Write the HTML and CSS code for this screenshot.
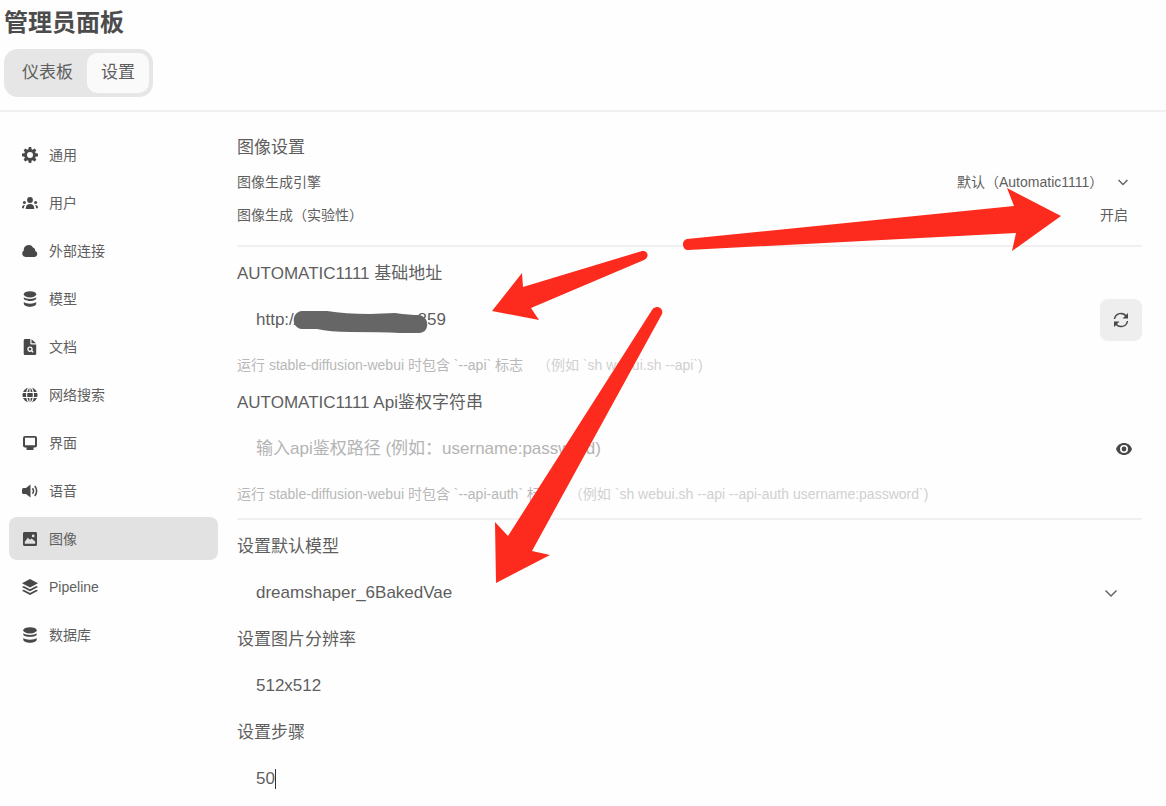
FILE: index.html
```html
<!DOCTYPE html>
<html lang="zh-CN">
<head>
<meta charset="utf-8">
<meta name="viewport" content="width=device-width, initial-scale=1">
<title>管理员面板</title>
<link rel="stylesheet" href="styles.css">
</head>
<body>
<header class="header">
  <h1 class="title">管理员面板</h1>
  <div class="tabs">
    <button class="tab" type="button">仪表板</button>
    <button class="tab tab-active" type="button">设置</button>
  </div>
</header>
<div class="layout">
  <nav class="sidebar">
    <a class="nav-item" href="#general"><svg class="icon" viewBox="0 0 16 16"><path fill-rule="evenodd" d="M6.800 0h2.400l.4 2.200 1.100.5 1.900-1.300 1.800 1.800-1.300 1.900.5 1.100 2.400.4v2.600l-2.400.5-.5 1.100 1.300 1.900-1.800 1.800-1.900-1.300-1.100.5L9.200 16H6.800l-.4-2.300-1.100-.5-1.900 1.300-1.800-1.800 1.300-1.900-.5-1.100L0 9.200V6.600l2.400-.4.5-1.100-1.300-1.900 1.800-1.800 1.900 1.300 1.100-.5zM8 5a3 3 0 1 0 0 6 3 3 0 0 0 0-6z"/></svg>通用</a>
    <a class="nav-item" href="#users"><svg class="icon" viewBox="0 0 16 16"><circle cx="8" cy="5" r="2.900"/><path d="M3.700 14c0-3.200 1.500-5 4.300-5s4.300 1.800 4.300 5z"/><circle cx="2.400" cy="7.400" r="1.500"/><circle cx="13.600" cy="7.400" r="1.500"/><path d="M0 13.200c0-2 .8-3.100 2.900-3.100-.7.900-1 1.900-1 3.100zM16 13.200c0-2-.8-3.100-2.900-3.100.7.900 1 1.900 1 3.100z"/></svg>用户</a>
    <a class="nav-item" href="#connections"><svg class="icon" viewBox="0 0 16 16"><path d="M3.500 14A3.500 3.500 0 0 1 1.800 7.600 5 5 0 0 1 11 4.400a3 3 0 0 1 2.100 3.300A3.300 3.300 0 0 1 12.800 14z"/></svg>外部连接</a>
    <a class="nav-item" href="#models"><svg class="icon" viewBox="0 0 16 16"><ellipse cx="8" cy="3.300" rx="6.200" ry="3.100"/><path d="M1.800 6.200c2.600 2.300 9.800 2.300 12.400 0v1.200c-.5 3.300-11.900 3.300-12.400 0zM1.800 11c2.600 2.300 9.800 2.300 12.400 0v1.700c-.5 3.900-11.900 3.900-12.400 0z"/></svg>模型</a>
    <a class="nav-item" href="#documents"><svg class="icon" viewBox="0 0 16 16"><path fill-rule="evenodd" d="M3.300 0h5v4.200c0 .8.400 1.200 1.200 1.200h4.700v9c0 1-.6 1.600-1.600 1.600H3.300c-1 0-1.600-.6-1.600-1.600V1.600C1.700.6 2.300 0 3.300 0zM8 7.500a2.700 2.700 0 1 0 1.400 5l1.300 1.200.9-.9-1.200-1.300A2.700 2.700 0 0 0 8 7.500zM8 8.800a1.400 1.400 0 1 1 0 2.800 1.400 1.400 0 0 1 0-2.800z"/><path d="M9.500.2l4.500 4h-4.500z"/></svg>文档</a>
    <a class="nav-item" href="#search"><svg class="icon" viewBox="0 0 16 16"><circle cx="8" cy="8" r="7.600"/><g class="cut"><ellipse cx="8" cy="8" rx="3.400" ry="7.700"/><path d="M0 5.500h16M0 10.500h16M8 0v5.500M8 10.500V16"/></g></svg>网络搜索</a>
    <a class="nav-item" href="#interface"><svg class="icon" viewBox="0 0 16 16"><path fill-rule="evenodd" d="M3 1h10a2 2 0 0 1 2 2v7.500a2 2 0 0 1-2 2h-1.500V15h-7v-2.500H3a2 2 0 0 1-2-2V3a2 2 0 0 1 2-2zm0 1.700v7.600h10V2.700z"/></svg>界面</a>
    <a class="nav-item" href="#audio"><svg class="icon" viewBox="0 0 16 16"><path d="M8.500 1.500v13L4 11H1.500Q0 11 0 9.500v-3Q0 5 1.500 5H4z"/><path class="line" d="M10.500 5.300q2 2.700 0 5.400M12.800 3q3.700 5 0 10"/></svg>语音</a>
    <a class="nav-item nav-active" href="#images" aria-current="page"><svg class="icon" viewBox="0 0 16 16"><path fill-rule="evenodd" d="M2.500 1h11C14.500 1 15 1.600 15 2.500v11c0 .9-.6 1.500-1.500 1.500h-11C1.600 15 1 14.400 1 13.500v-11C1 1.600 1.600 1 2.500 1zm.3 9.700 3-3.900 2.200 2 1.600-1.200 3.600 2.900v2.200H2.800zM11.200 3.500a1.400 1.400 0 1 0 0 2.800 1.400 1.400 0 0 0 0-2.800z"/></svg>图像</a>
    <a class="nav-item" href="#pipelines"><svg class="icon" viewBox="0 0 16 16"><path d="M8 0l8 4.200-8 4.300-8-4.300zM1.800 7L8 10.300 14.200 7 16 8l-8 4.300L0 8zM1.800 10.800L8 14l6.200-3.200 1.800 1L8 16l-8-4.200z"/></svg>Pipeline</a>
    <a class="nav-item" href="#database"><svg class="icon" viewBox="0 0 16 16"><ellipse cx="8" cy="3.300" rx="6.700" ry="3.100"/><path d="M1.300 6.200c2.600 2.300 10.800 2.300 13.400 0v1.200c-.5 3.300-12.900 3.300-13.400 0zM1.300 11c2.600 2.300 10.800 2.300 13.400 0v1.700c-.5 3.900-12.900 3.900-13.400 0z"/></svg>数据库</a>
  </nav>
  <main class="main">
    <section class="section">
      <h2 class="heading">图像设置</h2>
      <div class="row">
        <label for="engine">图像生成引擎</label>
        <div class="select-wrap">
          <select class="engine" id="engine"><option>默认（Automatic1111）</option></select>
          <svg class="chevron chevron-engine" viewBox="0 0 12 12"><path d="M1.500 4L6 8.500 10.500 4"/></svg>
        </div>
      </div>
      <div class="row">
        <span>图像生成（实验性）</span>
        <button class="toggle" type="button">开启</button>
      </div>
    </section>
    <section class="section">
      <label class="heading" for="url">AUTOMATIC1111 基础地址</label>
      <div class="field">
        <input class="input" id="url" type="text" value="http://xxxxxxxxxxxxxx859" spellcheck="false">
        <button class="refresh" type="button" aria-label="刷新"><svg class="icon" viewBox="0 0 16 16"><path class="line" d="M1.500 7a6.500 6.500 0 0 1 11.800-2.700M14.500 9a6.500 6.500 0 0 1-11.800 2.700"/><path d="M15 1v5.500H9.500zM1 15V9.500h5.500z"/></svg></button>
      </div>
      <p class="hint">运行 stable-diffusion-webui 时包含 `--api` 标志 <span class="hint-light">（例如 `sh webui.sh --api`)</span></p>
      <label class="heading" for="auth">AUTOMATIC1111 Api鉴权字符串</label>
      <div class="field">
        <input class="input" id="auth" type="text" placeholder="输入api鉴权路径 (例如：username:password)">
        <button class="reveal" type="button" aria-label="显示"><svg class="icon" viewBox="0 0 16 16"><path fill-rule="evenodd" d="M8 2c3.800 0 6.800 2.300 8 6-1.200 3.700-4.200 6-8 6S1.200 11.700 0 8c1.200-3.700 4.200-6 8-6zm0 2a4 4 0 1 0 0 8 4 4 0 0 0 0-8z"/><circle cx="8" cy="8" r="2.400"/></svg></button>
      </div>
      <p class="hint">运行 stable-diffusion-webui 时包含 `--api-auth` 标志 <span class="hint-light">（例如 `sh webui.sh --api --api-auth username:password`)</span></p>
    </section>
    <section class="section">
      <label class="heading" for="model">设置默认模型</label>
      <div class="field">
        <select class="input" id="model"><option>dreamshaper_6BakedVae</option></select>
        <svg class="chevron chevron-model" viewBox="0 0 12 12"><path d="M.5 3.500L6 9l5.500-5.500"/></svg>
      </div>
      <label class="heading" for="size">设置图片分辨率</label>
      <div class="field"><input class="input" id="size" type="text" value="512x512"></div>
      <label class="heading" for="steps">设置步骤</label>
      <div class="field"><input class="input input-steps" id="steps" type="text" value="50"><span class="caret"></span></div>
    </section>
  </main>
</div>
<svg class="annotations" width="1166" height="806" viewBox="0 0 1166 806" aria-hidden="true">
  <path class="redaction" d="M302 311L327 311Q345 314 370 314L395 313Q410 315 419 315C430 317 430 333 419 333L400 333Q380 332 350 332Q330 332 317 329L302 329C291 328 291 312 302 311z"/>
  <path class="arrow" d="M687 239L1014 206 1007 188 1061 216 1012 251 1016 233 688 250C682 250 681 240 687 239z"/>
  <path class="arrow" d="M642 251L523 287 522 273 492 311 539 320 531 308 644 260C650 257 648 250 642 251z"/>
  <path class="arrow" d="M652 310L508 536 495 522 496 583 550 555 532 551 662 314C664 308 656 304 652 310z"/>
</svg>
</body>
</html>
```
FILE: styles.css
```css
* {
  box-sizing: border-box;
}

body {
  position: relative;
  margin: 0;
  min-height: 100vh;
  background: #fefefe;
  color: #5e5e5e;
  font-family: "Liberation Sans", "Noto Sans CJK SC", sans-serif;
  font-size: 14px;
  line-height: 20px;
  overflow-x: hidden;
}

button,
input,
select {
  margin: 0;
  border: 0;
  padding: 0;
  background: none;
  color: inherit;
  font: inherit;
  outline: 0;
}

.header {
  display: flex;
  flex-direction: column;
  align-items: flex-start;
  gap: 10px;
  padding: 7px 4px 13px;
  border-bottom: 2px solid #f0f0f0;
}

.title {
  margin: 0;
  color: #4c4c4c;
  font-size: 24px;
  line-height: 32px;
}

.tabs {
  display: flex;
  padding: 4px;
  border-radius: 14px;
  background: #e6e6e6;
}

.tab {
  height: 40px;
  padding: 0 14px;
  border-radius: 10px;
  font-size: 17px;
}

.tab-active {
  background: #fafafa;
}

.layout {
  display: flex;
}

.sidebar {
  display: flex;
  flex-direction: column;
  flex: 0 0 218px;
  gap: 5px;
  padding: 21px 0 0 9px;
}

.nav-item {
  display: flex;
  align-items: center;
  gap: 11px;
  height: 43px;
  padding: 0 13px;
  border-radius: 8px;
  color: inherit;
  text-decoration: none;
}

.nav-active {
  background: #e2e2e2;
}

.icon {
  flex: none;
  width: 16px;
  height: 16px;
  fill: #484848;
}

.icon .line {
  fill: none;
  stroke: #484848;
  stroke-width: 1.5;
}

.icon .cut {
  fill: none;
  stroke: #fefefe;
  stroke-width: 1.2;
}

.main {
  flex: 1;
  min-width: 0;
  padding: 24px 24px 0 19px;
}

.section + .section {
  margin-top: 14px;
  padding-top: 15px;
  border-top: 2px solid #f0f0f0;
}

.heading {
  display: block;
  margin: 0;
  font-size: 17px;
  font-weight: 400;
  line-height: 24px;
}

.row {
  display: flex;
  align-items: center;
  justify-content: space-between;
  height: 33px;
}

.section > .heading + .row {
  margin-top: 5px;
}

.select-wrap {
  position: relative;
}

.engine {
  appearance: none;
  height: 32px;
  padding-right: 38px;
}

.toggle {
  height: 32px;
  padding: 0 14px;
}

.chevron {
  position: absolute;
  top: 50%;
  width: 12px;
  height: 12px;
  margin-top: -6px;
  fill: none;
  stroke: #666;
  stroke-width: 1.5;
  pointer-events: none;
}

.chevron-engine {
  right: 13px;
}

.chevron-model {
  right: 25px;
}

.field {
  position: relative;
  display: flex;
  align-items: center;
  height: 42px;
  margin: 13px 0 14px;
}

.field:last-child {
  margin-bottom: 0;
}

.input {
  appearance: none;
  flex: 1;
  min-width: 0;
  height: 42px;
  padding-left: 19px;
  font-size: 17px;
}

.input::placeholder {
  color: #b4b4b4;
  opacity: 1;
}

.input-steps {
  flex: none;
  width: calc(2ch + 19px);
}

.caret {
  width: 1px;
  height: 20px;
  background: #333;
}

.refresh {
  display: grid;
  place-items: center;
  width: 42px;
  height: 42px;
  border-radius: 8px;
  background: #eee;
}

.reveal {
  display: grid;
  place-items: center;
  width: 36px;
  height: 36px;
}

.hint {
  margin: 0;
  color: #b8b8b8;
}

.hint + .heading {
  margin-top: 16px;
}

.hint-light {
  margin-left: 10px;
  color: #d0d0d0;
}

.annotations {
  position: absolute;
  top: 0;
  left: 0;
  pointer-events: none;
}

.redaction {
  fill: #666;
}

.arrow {
  fill: #fc2b1d;
}
```
